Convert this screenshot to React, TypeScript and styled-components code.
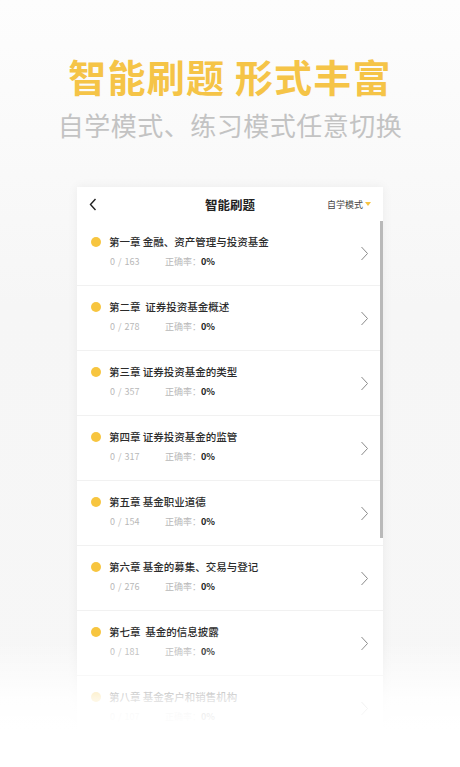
import styled, { createGlobalStyle } from 'styled-components';

const GlobalStyle = createGlobalStyle`
  html, body {
    margin: 0;
    padding: 0;
    background: #f8f8f8;
  }
  body {
    font-family: "Noto Sans CJK SC", "Noto Sans", sans-serif;
  }
`;

const Page = styled.div`
  position: relative;
  width: 460px;
  height: 767px;
  overflow: hidden;
  display: flex;
  flex-direction: column;
  align-items: center;
  background: linear-gradient(#fdfdfd, #f6f6f6 40%, #f7f7f7);
`;

const Headline = styled.h1`
  margin: 55px 0 0;
  font-size: 38px;
  line-height: 42px;
  font-weight: 700;
  letter-spacing: 1.2px;
  color: #f5c447;
`;

const Tagline = styled.p`
  margin: 13px 0 0;
  font-size: 26px;
  line-height: 30px;
  font-weight: 400;
  letter-spacing: 0.5px;
  color: #c3c3c3;
`;

const Card = styled.div`
  position: relative;
  margin-top: 47px;
  width: 306px;
  flex: 1;
  background: #fff;
  box-shadow: 0 0 10px rgba(0, 0, 0, 0.06);
`;

const Header = styled.div`
  height: 34px;
  display: grid;
  grid-template-columns: 60px 1fr 60px;
  align-items: center;
`;

const Back = styled.span`
  padding-left: 12px;
  display: flex;
`;

const HeaderTitle = styled.span`
  text-align: center;
  font-size: 12.5px;
  font-weight: 700;
  color: #222;
`;

const Mode = styled.span`
  display: flex;
  align-items: center;
  justify-content: flex-end;
  padding-right: 12px;
  font-size: 9px;
  color: #444;
  white-space: nowrap;
`;

const Caret = styled.span`
  width: 0;
  height: 0;
  margin-left: 2px;
  border-left: 3.5px solid transparent;
  border-right: 3.5px solid transparent;
  border-top: 4.5px solid #f6c443;
`;

const List = styled.div`
  display: flex;
  flex-direction: column;
`;

const Row = styled.div`
  height: 65px;
  box-sizing: border-box;
  border-bottom: 1px solid #f1f1f1;
  display: flex;
  align-items: center;
  padding: 0 14px;
`;

const RowBody = styled.div`
  flex: 1;
  display: flex;
  flex-direction: column;
  gap: 7px;
  padding-bottom: 4px;
`;

const TitleLine = styled.div`
  display: flex;
  align-items: center;
  gap: 8px;
  font-size: 10.5px;
  line-height: 14px;
  font-weight: 500;
  color: #2b2b2b;
  white-space: pre;
`;

const Dot = styled.span`
  width: 10px;
  height: 10px;
  border-radius: 50%;
  background: #f7c53f;
  flex: none;
`;

const Stats = styled.div`
  display: flex;
  align-items: center;
  padding-left: 19px;
  font-size: 9px;
  line-height: 12px;
  color: #b8b8b8;
`;

const Count = styled.span`
  width: 55px;
  word-spacing: 1px;
`;

const Rate = styled.span`
  color: #222;
  font-weight: 700;
`;

const Scrollbar = styled.div`
  position: absolute;
  right: 0;
  top: 34px;
  width: 3px;
  height: 317px;
  background: #b9b9b9;
`;

const Fade = styled.div`
  position: absolute;
  left: 0;
  right: 0;
  bottom: 0;
  height: 125px;
  background: linear-gradient(rgba(255, 255, 255, 0), rgba(255, 255, 255, 0.85) 45%, #fff 70%);
  pointer-events: none;
`;

const chapters = [
  { title: '第一章 金融、资产管理与投资基金', total: 163 },
  { title: '第二章  证券投资基金概述', total: 278 },
  { title: '第三章 证券投资基金的类型', total: 357 },
  { title: '第四章 证券投资基金的监管', total: 317 },
  { title: '第五章 基金职业道德', total: 154 },
  { title: '第六章 基金的募集、交易与登记', total: 276 },
  { title: '第七章  基金的信息披露', total: 181 },
  { title: '第八章 基金客户和销售机构', total: 107 },
];

const Chevron = () => (
  <svg width="9" height="15" viewBox="0 0 9 15">
    <path d="M1.5 1 L7.5 7.5 L1.5 14" fill="none" stroke="#8a8a8a" strokeWidth="1" />
  </svg>
);

const BackArrow = () => (
  <svg width="8" height="13" viewBox="0 0 8 13">
    <path d="M6.5 1 L1.5 6.5 L6.5 12" fill="none" stroke="#222" strokeWidth="1.4" />
  </svg>
);

export default function App() {
  return (
    <Page>
      <GlobalStyle />
      <Headline>智能刷题 形式丰富</Headline>
      <Tagline>自学模式、练习模式任意切换</Tagline>
      <Card>
        <Header>
          <Back><BackArrow /></Back>
          <HeaderTitle>智能刷题</HeaderTitle>
          <Mode>自学模式<Caret /></Mode>
        </Header>
        <List>
          {chapters.map((c) => (
            <Row key={c.title}>
              <RowBody>
                <TitleLine><Dot />{c.title}</TitleLine>
                <Stats>
                  <Count>0 / {c.total}</Count>
                  <span>正确率：</span>
                  <Rate>0%</Rate>
                </Stats>
              </RowBody>
              <Chevron />
            </Row>
          ))}
        </List>
        <Scrollbar />
      </Card>
      <Fade />
    </Page>
  );
}
